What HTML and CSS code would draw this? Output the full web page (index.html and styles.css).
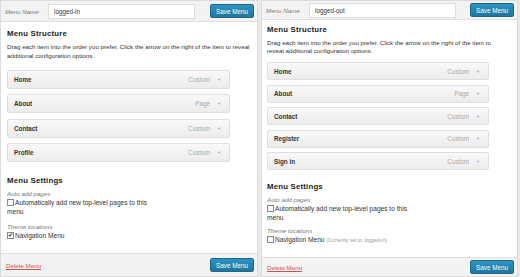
FILE: index.html
```html
<!DOCTYPE html>
<html>
<head>
<meta charset="utf-8">
<link rel="stylesheet" href="styles.css">
</head>
<body>
<div class="page">
  <div class="panel panel-left">
    <div class="head">
      <span class="label">Menu Name</span>
      <span class="input">logged-in</span>
      <span class="btn">Save Menu</span>
    </div>
    <div class="body">
      <h3 class="title">Menu Structure</h3>
      <p class="desc">Drag each item into the order you prefer. Click the arrow on the right of the item to reveal additional configuration options.</p>
      <div class="items">
        <div class="item"><span class="iname">Home</span><span class="itype">Custom</span><span class="arrow">▼</span></div>
        <div class="item"><span class="iname">About</span><span class="itype">Page</span><span class="arrow">▼</span></div>
        <div class="item"><span class="iname">Contact</span><span class="itype">Custom</span><span class="arrow">▼</span></div>
        <div class="item"><span class="iname">Profile</span><span class="itype">Custom</span><span class="arrow">▼</span></div>
      </div>
      <h3 class="title settings">Menu Settings</h3>
      <div class="sub">Auto add pages</div>
      <div class="check"><span class="box"></span>Automatically add new top-level pages to this<br>menu</div>
      <div class="sub theme">Theme locations</div>
      <div class="check"><span class="box checked">✔</span>Navigation Menu</div>
    </div>
    <div class="foot">
      <a class="delete">Delete Menu</a>
      <span class="btn">Save Menu</span>
    </div>
  </div>
  <div class="panel panel-right">
    <div class="head">
      <span class="label">Menu Name</span>
      <span class="input">logged-out</span>
      <span class="btn">Save Menu</span>
    </div>
    <div class="body">
      <h3 class="title">Menu Structure</h3>
      <p class="desc">Drag each item into the order you prefer. Click the arrow on the right of the item to reveal additional configuration options.</p>
      <div class="items">
        <div class="item"><span class="iname">Home</span><span class="itype">Custom</span><span class="arrow">▼</span></div>
        <div class="item"><span class="iname">About</span><span class="itype">Page</span><span class="arrow">▼</span></div>
        <div class="item"><span class="iname">Contact</span><span class="itype">Custom</span><span class="arrow">▼</span></div>
        <div class="item"><span class="iname">Register</span><span class="itype">Custom</span><span class="arrow">▼</span></div>
        <div class="item"><span class="iname">Sign in</span><span class="itype">Custom</span><span class="arrow">▼</span></div>
      </div>
      <h3 class="title settings">Menu Settings</h3>
      <div class="sub">Auto add pages</div>
      <div class="check"><span class="box"></span>Automatically add new top-level pages to this<br>menu</div>
      <div class="sub theme">Theme locations</div>
      <div class="check"><span class="box"></span>Navigation Menu <span class="note">(Currently set to: logged-in)</span></div>
    </div>
    <div class="foot">
      <a class="delete">Delete Menu</a>
      <span class="btn">Save Menu</span>
    </div>
  </div>
</div>
</body>
</html>
```
FILE: styles.css
```css
html, body {
  margin: 0;
  padding: 0;
  background: #e9e9e9;
  font-family: "Liberation Sans", Arial, sans-serif;
  color: #222;
}
.page {
  display: flex;
  gap: 3px;
  width: 520px;
  height: 277px;
  overflow: hidden;
}
.panel {
  background: #fff;
  border: 1px solid #dcdcdc;
  display: flex;
  flex-direction: column;
  box-sizing: border-box;
}
.panel-left { width: 258px; height: 277px; }
.panel-right { width: 257px; height: 277px; }

.head {
  display: flex;
  align-items: center;
  background: #f3f3f3;
  border-bottom: 1px solid #dfdfdf;
  height: 20px;
  padding: 0 3px 0 4px;
  flex: none;
}
.panel-right .head { height: 18px; }
.label {
  font-style: italic;
  font-size: 6.2px;
  color: #777;
  width: 43px;
}
.input {
  width: 140px;
  height: 13px;
  border: 1px solid #ddd;
  background: #fff;
  font-size: 6.3px;
  color: #333;
  line-height: 13px;
  padding-left: 5px;
}
.btn {
  margin-left: auto;
  width: 44px;
  height: 14px;
  box-sizing: border-box;
  background: linear-gradient(#2a95c5, #21759b);
  border: 1px solid #1e6a8d;
  border-radius: 2px;
  color: #fff;
  font-size: 6.3px;
  display: flex;
  align-items: center;
  justify-content: center;
}
.body {
  flex: 1;
  padding: 7px 6px 0 6px;
}
.panel-right .body { padding: 5px 4px 0 5px; }
.title {
  margin: 0;
  font-size: 7.8px;
  line-height: 10px;
  font-weight: bold;
  color: #222;
  letter-spacing: 0.2px;
}
.desc {
  margin: 3px 0 0;
  font-size: 6.2px;
  line-height: 9px;
  color: #333;
  width: 244px;
}
.panel-right .desc { line-height: 8px; margin-top: 4px; width: 240px; }
.items {
  display: flex;
  flex-direction: column;
  gap: 5.5px;
  margin-top: 9.5px;
  width: 223px;
}
.panel-right .items { gap: 4.5px; margin-top: 7px; width: 222px; }
.item {
  height: 19px;
  box-sizing: border-box;
  border: 1px solid #dfdfdf;
  border-radius: 2px;
  background: linear-gradient(#f9f9f9, #ececec);
  display: flex;
  align-items: center;
  padding: 0 8px 0 6px;
  font-size: 6.3px;
}
.panel-right .item { height: 18px; }
.iname { font-weight: bold; color: #333; }
.itype { margin-left: auto; color: #aaa; }
.arrow { color: #aaa; font-size: 4px; margin-left: 7px; }
.settings { margin-top: 14px; }
.panel-right .settings { margin-top: 12px; }
.sub {
  margin-top: 3px;
  font-size: 6.2px;
  line-height: 9px;
  font-style: italic;
  color: #777;
}
.sub.theme { margin-top: 6px; }
.panel-right .sub.theme { margin-top: 4px; }
.check {
  font-size: 6.6px;
  line-height: 9px;
  color: #333;
}
.box {
  display: inline-block;
  vertical-align: -1px;
  width: 7px;
  height: 7px;
  box-sizing: border-box;
  border: 1px solid #888;
  background: #fff;
  margin-right: 1px;
  font-size: 6px;
  line-height: 5px;
  text-align: center;
  color: #222;
  overflow: hidden;
}
.note { color: #999; font-size: 5px; }
.foot {
  flex: none;
  height: 22px;
  border-top: 1px solid #dfdfdf;
  background: #f3f3f3;
  display: flex;
  align-items: center;
  padding: 0 3px 0 5px;
}
.panel-right .foot { height: 18px; }
.delete {
  color: #d54e4e;
  text-decoration: underline;
  font-size: 6.2px;
}
```
